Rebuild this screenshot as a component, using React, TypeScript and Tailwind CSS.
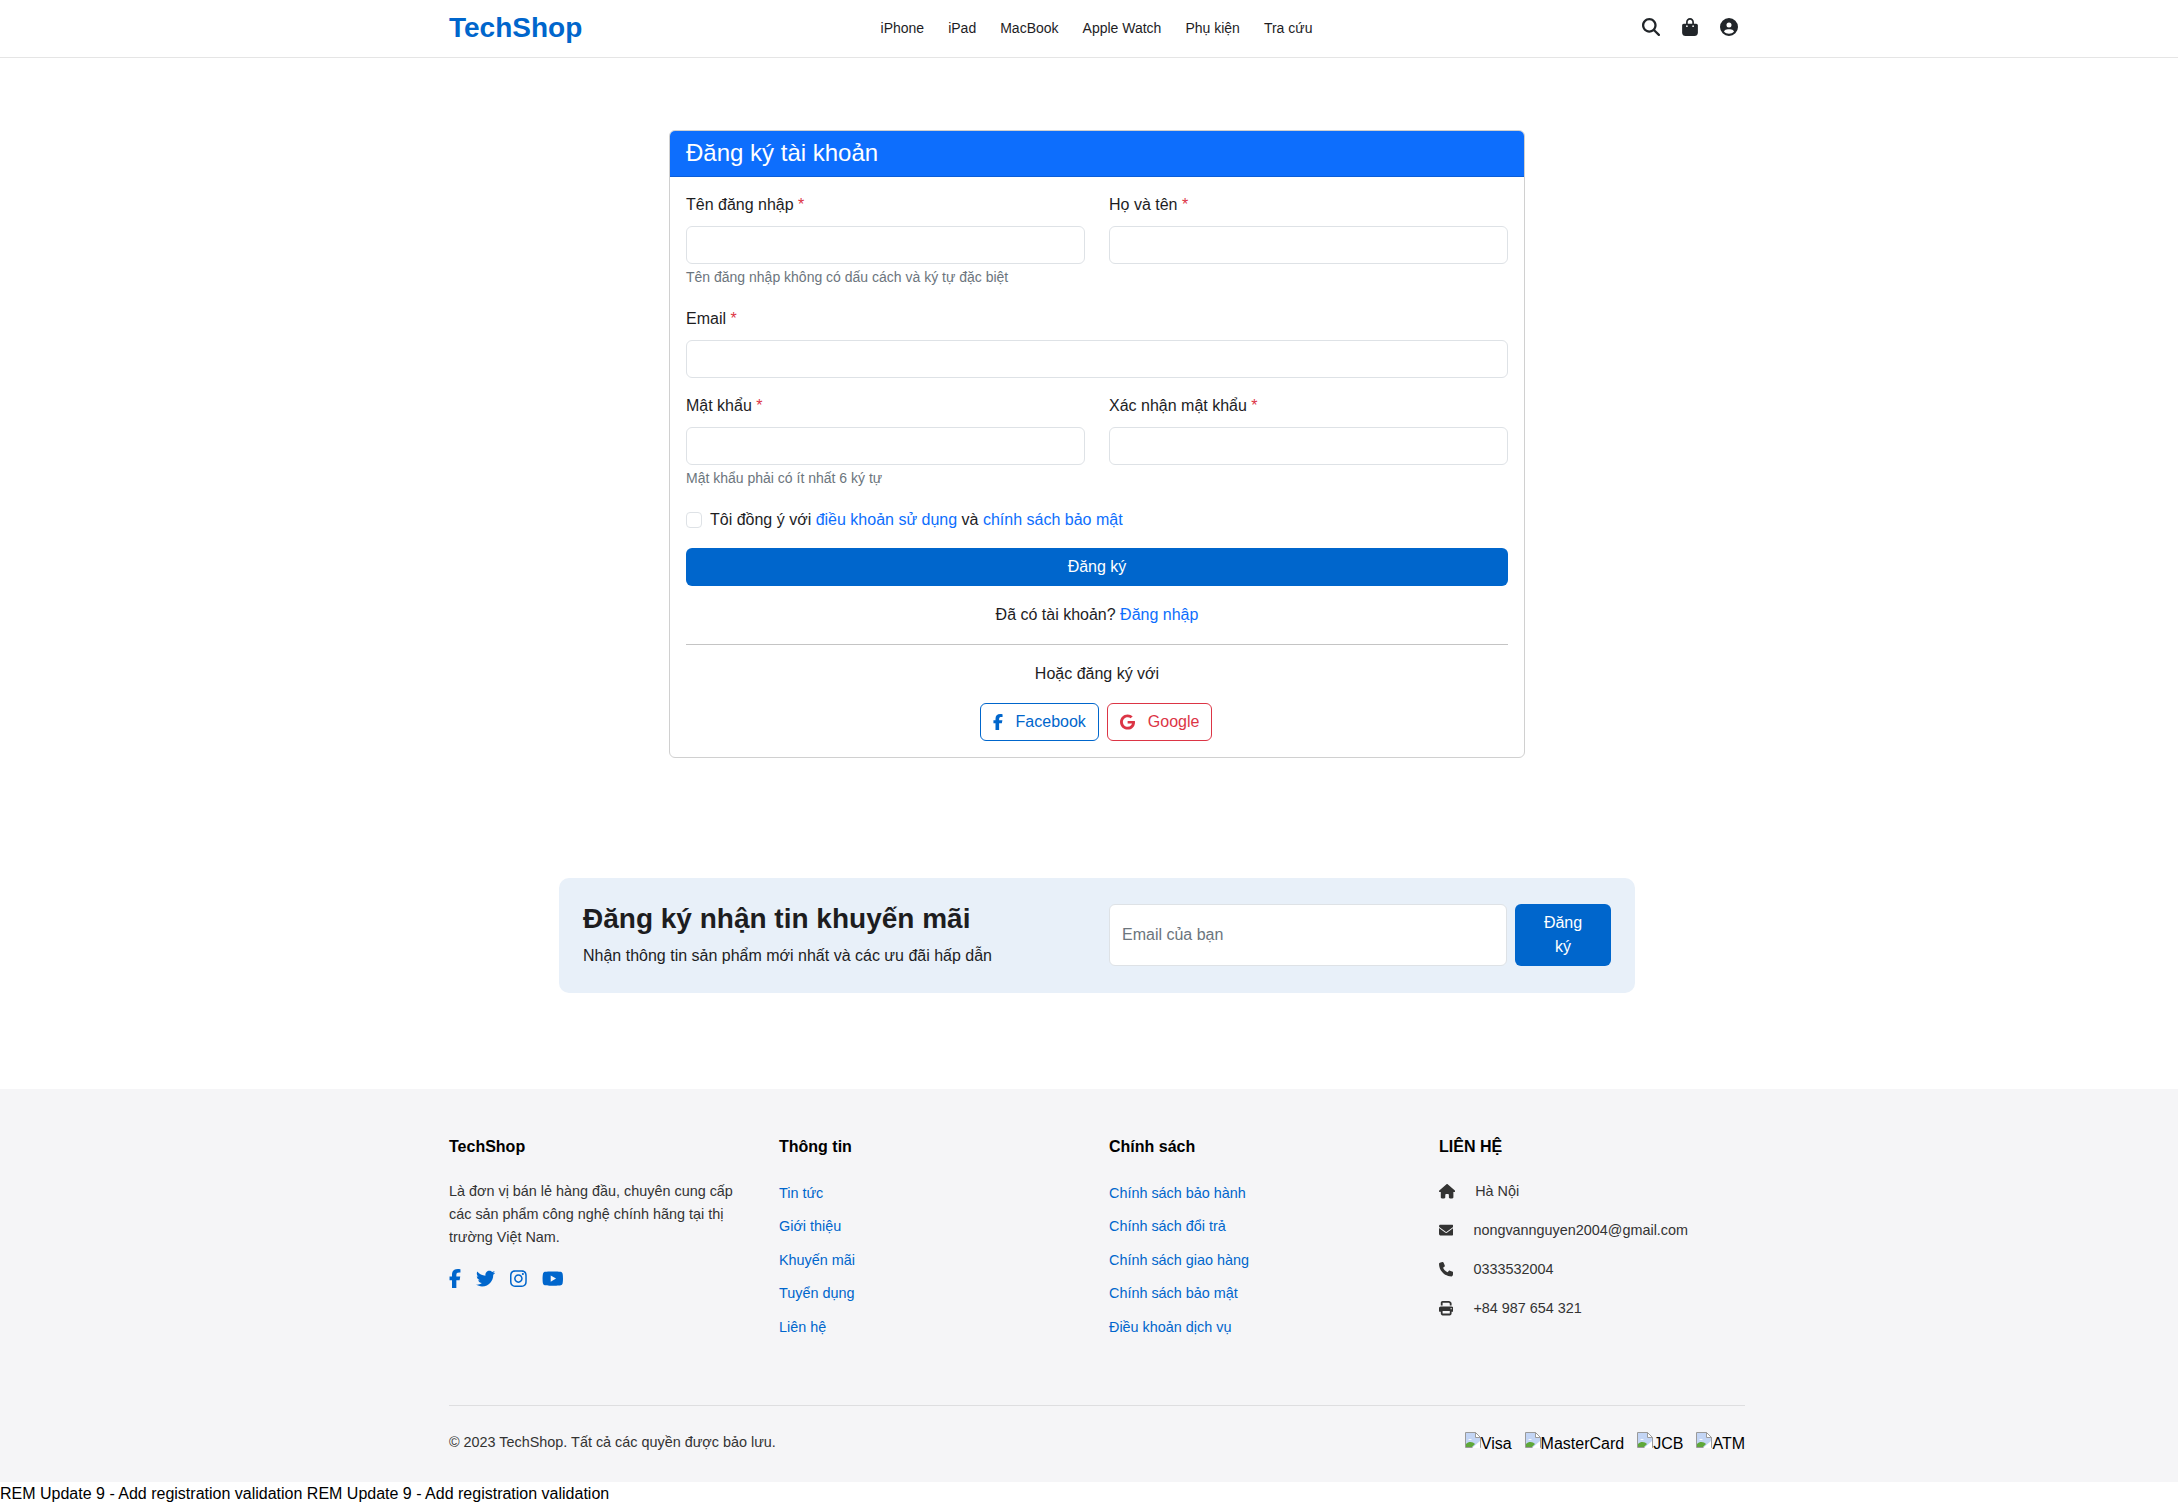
import {
  FaBagShopping,
  FaCircleUser,
  FaEnvelope,
  FaFacebookF,
  FaGoogle,
  FaHouse,
  FaInstagram,
  FaMagnifyingGlass,
  FaPhone,
  FaPrint,
  FaTwitter,
  FaYoutube,
} from "react-icons/fa6";

const navItems = ["iPhone", "iPad", "MacBook", "Apple Watch", "Phụ kiện", "Tra cứu"];
const infoLinks = ["Tin tức", "Giới thiệu", "Khuyến mãi", "Tuyển dụng", "Liên hệ"];
const policyLinks = [
  "Chính sách bảo hành",
  "Chính sách đổi trả",
  "Chính sách giao hàng",
  "Chính sách bảo mật",
  "Điều khoản dịch vụ",
];
const payments = ["Visa", "MasterCard", "JCB", "ATM"];

function Label({ text }: { text: string }) {
  return (
    <label className="block h-6 mb-[9px] leading-6">
      {text} <span className="text-[#dc3545]">*</span>
    </label>
  );
}

function Input({ type = "text" }: { type?: string }) {
  return <input type={type} className="block w-full h-[38px] bg-white border border-[#dee2e6] rounded-md px-3 outline-none" />;
}

function Hint({ text }: { text: string }) {
  return <div className="mt-[3px] text-sm leading-[21px] text-[#6c757d]">{text}</div>;
}

function BrokenImage({ alt }: { alt: string }) {
  return (
    <span className="inline-flex items-start text-black leading-6 pt-[2px]">
      <svg width="16" height="16" viewBox="0 0 16 16" className="shrink-0">
        <path d="M.5.5h10l5 5v10H.5z" fill="#c3d5f5" stroke="#9a9a9a" />
        <path d="M10.5.5v5h5z" fill="#fff" stroke="#9a9a9a" />
        <path d="M3 8c1-1.500 3-1.500 4 0H3z" fill="#fff" />
        <path d="M1 15v-3c3-3 7-2 9 0l-3 3z" fill="#5fa83a" />
        <path d="M15 9 7 16h8z" fill="#fff" />
      </svg>
      {alt}
    </span>
  );
}

function FooterLinks({ title, links }: { title: string; links: string[] }) {
  return (
    <div>
      <h5 className="font-bold text-black leading-6 mb-[22px]">{title}</h5>
      <ul>
        {links.map((link) => (
          <li key={link} className="mb-2 text-[14.4px] leading-[25.4px] text-[#0066cc]">
            <a href="#">{link}</a>
          </li>
        ))}
      </ul>
    </div>
  );
}

export default function App() {
  return (
    <div className="bg-white text-[#1d1d1f] text-base font-['Liberation_Sans',Arial,sans-serif]">
      <header className="h-[58px] border-b border-[#e5e5e5] pl-4">
        <div className="mx-auto w-[1296px] h-full grid grid-cols-[1fr_auto_1fr] items-center">
          <a href="#" className="text-[28px] font-bold text-[#0066cc] leading-[34px] -mt-[1px]">TechShop</a>
          <nav className="flex gap-6 text-sm -mt-[1px] mr-[1px]">
            {navItems.map((item) => (
              <a key={item} href="#">{item}</a>
            ))}
          </nav>
          <div className="flex justify-end items-center gap-[21px] pr-[7px] text-[18px] text-[#212529] -mt-[3px]">
            <FaMagnifyingGlass />
            <FaBagShopping />
            <FaCircleUser />
          </div>
        </div>
      </header>

      <main className="pl-4 pt-[72px]">
        <div className="mx-auto w-[856px] border border-[#d0d0d0] rounded-md overflow-hidden">
          <div className="bg-[#0d6efd] h-[46px] px-4 pb-[2px] flex items-center text-white text-2xl border-b border-[#0b5ed7]">
            Đăng ký tài khoản
          </div>
          <form className="px-4 pt-4 pb-4">
            <div className="grid grid-cols-2 gap-x-6">
              <div>
                <Label text="Tên đăng nhập" />
                <Input />
                <Hint text="Tên đăng nhập không có dấu cách và ký tự đặc biệt" />
              </div>
              <div>
                <Label text="Họ và tên" />
                <Input />
              </div>
            </div>
            <div className="mt-[19px]">
              <Label text="Email" />
              <Input type="email" />
            </div>
            <div className="grid grid-cols-2 gap-x-6 mt-4">
              <div>
                <Label text="Mật khẩu" />
                <Input type="password" />
                <Hint text="Mật khẩu phải có ít nhất 6 ký tự" />
              </div>
              <div>
                <Label text="Xác nhận mật khẩu" />
                <Input type="password" />
              </div>
            </div>
            <div className="flex items-center mt-[19px] h-6">
              <input type="checkbox" className="appearance-none w-4 h-4 bg-white border border-[#dee2e6] rounded-[4px]" />
              <span className="ml-2">
                Tôi đồng ý với <a href="#" className="text-[#0d6efd]">điều khoản sử dụng</a> và{" "}
                <a href="#" className="text-[#0d6efd]">chính sách bảo mật</a>
              </span>
            </div>
            <button type="button" className="block w-full h-[38px] mt-4 bg-[#0066cc] text-white rounded-md">
              Đăng ký
            </button>
            <p className="text-center leading-6 mt-[17px]">
              Đã có tài khoản? <a href="#" className="text-[#0d6efd]">Đăng nhập</a>
            </p>
            <hr className="border-t border-[#c4c4c4] mt-[17px]" />
            <p className="text-center leading-6 mt-[17px]">Hoặc đăng ký với</p>
            <div className="flex justify-center gap-2 mt-[17px] mr-[2px]">
              <a href="#" className="flex items-center h-[38px] px-3 gap-[13px] border border-[#0066cc] text-[#0066cc] rounded-md">
                <FaFacebookF className="w-[10px]" />
                Facebook
              </a>
              <a href="#" className="flex items-center h-[38px] px-3 gap-[13px] border border-[#dc3545] text-[#dc3545] rounded-md">
                <FaGoogle className="w-[15px]" />
                Google
              </a>
            </div>
          </form>
        </div>

        <section className="mx-auto mt-[120px] w-[1076px] h-[115px] bg-[#e8f0f9] rounded-[10px] px-6 pb-[2px] grid grid-cols-2 gap-x-6 items-center">
          <div>
            <h3 className="text-[28px] font-bold leading-[34px] mb-2">Đăng ký nhận tin khuyến mãi</h3>
            <p className="leading-6">Nhận thông tin sản phẩm mới nhất và các ưu đãi hấp dẫn</p>
          </div>
          <div className="flex gap-2">
            <input
              placeholder="Email của bạn"
              className="flex-1 min-w-0 h-[62px] bg-white border border-[#dee2e6] rounded-md px-3 outline-none placeholder:text-[#6c757d]"
            />
            <button type="button" className="w-[96px] h-[62px] px-6 bg-[#0066cc] text-white rounded-md leading-6">
              Đăng ký
            </button>
          </div>
        </section>
      </main>

      <footer className="mt-[96px] h-[393px] bg-[#f5f5f7] pl-4 pt-[46px]">
        <div className="mx-auto w-[1296px]">
          <div className="grid grid-cols-4 gap-x-6 h-[268px]">
            <div>
              <h5 className="font-bold text-black leading-6 mb-[21px]">TechShop</h5>
              <p className="text-[14.4px] leading-[23px] text-[#333]">
                Là đơn vị bán lẻ hàng đầu, chuyên cung cấp các sản phẩm công nghệ chính hãng tại thị trường Việt Nam.
              </p>
              <div className="flex items-center gap-[15px] mt-5 text-[19.2px] text-[#0066cc]">
                <FaFacebookF className="w-3" />
                <FaTwitter className="w-[19.2px]" />
                <FaInstagram className="w-[16.8px]" />
                <FaYoutube className="w-[21.6px]" />
              </div>
            </div>
            <FooterLinks title="Thông tin" links={infoLinks} />
            <FooterLinks title="Chính sách" links={policyLinks} />
            <div>
              <h5 className="font-bold text-black leading-6 mb-[22px]">LIÊN HỆ</h5>
              <ul className="text-[14.4px] text-[#333] flex flex-col gap-[18px]">
                <li className="flex items-center h-[21px]"><FaHouse className="w-[16.2px] mr-5" />Hà Nội</li>
                <li className="flex items-center h-[21px]"><FaEnvelope className="mr-5" />nongvannguyen2004@gmail.com</li>
                <li className="flex items-center h-[21px]"><FaPhone className="mr-5" />0333532004</li>
                <li className="flex items-center h-[21px]"><FaPrint className="mr-5" />+84 987 654 321</li>
              </ul>
            </div>
          </div>
          <div className="border-t border-[#dedee0] mt-[2px] pt-6 flex justify-between items-start">
            <p className="text-[14.4px] leading-6 text-[#333]">© 2023 TechShop. Tất cả các quyền được bảo lưu.</p>
            <div className="flex gap-[13px]">
              {payments.map((name) => (
                <BrokenImage key={name} alt={name} />
              ))}
            </div>
          </div>
        </div>
      </footer>
      <div className="leading-6 text-black pb-[1px]">REM Update 9 - Add registration validation REM Update 9 - Add registration validation</div>
    </div>
  );
}
